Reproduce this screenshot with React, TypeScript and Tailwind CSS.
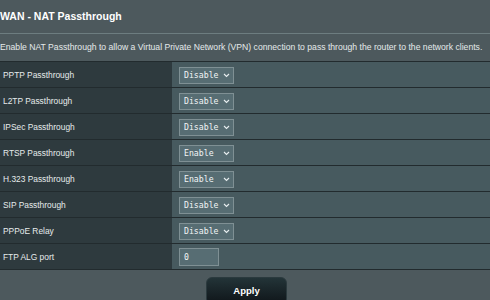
import React from "react";

const rows: { label: string; type: "select" | "input"; value: string }[] = [
  { label: "PPTP Passthrough", type: "select", value: "Disable" },
  { label: "L2TP Passthrough", type: "select", value: "Disable" },
  { label: "IPSec Passthrough", type: "select", value: "Disable" },
  { label: "RTSP Passthrough", type: "select", value: "Enable" },
  { label: "H.323 Passthrough", type: "select", value: "Enable" },
  { label: "SIP Passthrough", type: "select", value: "Disable" },
  { label: "PPPoE Relay", type: "select", value: "Disable" },
  { label: "FTP ALG port", type: "input", value: "0" },
];

function Chevron() {
  return (
    <svg width="7" height="5" viewBox="0 0 7 5" className="shrink-0">
      <path d="M1 1 L3.5 3.5 L6 1" fill="none" stroke="#e8eef0" strokeWidth="1.1" />
    </svg>
  );
}

export default function App() {
  return (
    <div
      className="w-[490px] h-[300px] overflow-hidden bg-[#4d595d] text-white"
      style={{ fontFamily: '"Liberation Sans", Arial, sans-serif' }}
    >
      <div className="h-[61px] flex flex-col">
        <div className="h-[33px] flex items-center text-[10.5px] font-bold leading-none">
          WAN - NAT Passthrough
        </div>
        <div className="h-px bg-[#76868a] opacity-80" />
        <div className="flex-1 flex items-center text-[8.65px] leading-none text-[#e4e9ea] whitespace-nowrap">
          Enable NAT Passthrough to allow a Virtual Private Network (VPN) connection to pass through the router to the network clients.
        </div>
      </div>
      <div className="border-t border-[#222b2e]">
        {rows.map((r) => (
          <div key={r.label} className="flex h-[26px] border-b border-[#222b2e]">
            <div className="w-[172px] shrink-0 bg-[#2e3a3e] flex items-center pl-[3px] pt-px text-[8.4px] text-[#e6ebec]">
              {r.label}
            </div>
            <div className="flex-1 bg-[#475a5f] flex items-center pl-[7px] pt-px">
              {r.type === "select" ? (
                <div
                  className="w-[55px] h-[17px] bg-[#576d73] border border-[#7f9094] flex items-center justify-between pl-[4px] pr-[3px] text-[8.2px] text-[#f2f5f6]"
                  style={{ fontFamily: '"DejaVu Sans Mono", "Liberation Mono", monospace' }}
                >
                  <span>{r.value}</span>
                  <Chevron />
                </div>
              ) : (
                <div
                  className="w-[40px] h-[18px] bg-[#576d73] border border-[#7f9094] flex items-center pl-[4px] text-[8.2px] text-[#f2f5f6]"
                  style={{ fontFamily: '"DejaVu Sans Mono", "Liberation Mono", monospace' }}
                >
                  {r.value}
                </div>
              )}
            </div>
          </div>
        ))}
      </div>
      <div className="flex justify-center pt-[7px] pl-[3px]">
        <div className="w-[81px] h-[28px] rounded-[6px] bg-gradient-to-b from-[#233438] to-[#0f1519] border border-[#2b3a3e] flex items-center justify-center text-[9.5px] font-bold text-white">
          Apply
        </div>
      </div>
    </div>
  );
}
